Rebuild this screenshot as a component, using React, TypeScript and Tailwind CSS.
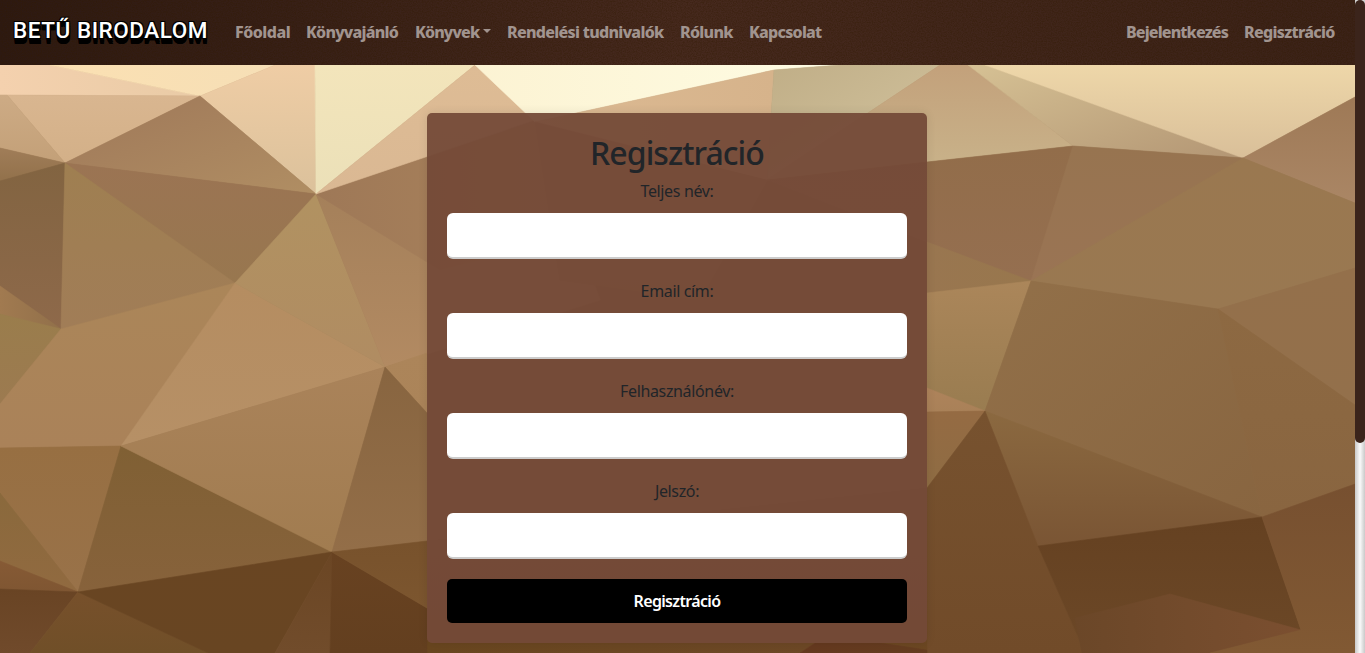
import React from "react";

type Axis = "v" | "h" | "d" | "u";
type Facet = [points: string, from: string, to: string, axis: Axis];

const AXES: Record<Axis, { x1: number; y1: number; x2: number; y2: number }> = {
  v: { x1: 0, y1: 0, x2: 0, y2: 1 },
  h: { x1: 0, y1: 0, x2: 1, y2: 0 },
  d: { x1: 0, y1: 0, x2: 1, y2: 1 },
  u: { x1: 0, y1: 1, x2: 1, y2: 0 },
};

const FACETS: Facet[] = [
  ["0,65 50,65 200,96 0,95", "#f4d1ae", "#e9cba6", "h"],
  ["50,65 275,65 200,96", "#fbe0b2", "#f6dfb6", "h"],
  ["275,65 315,65 316,194 200,96", "#efcda5", "#dbc19b", "v"],
  ["7,95 200,96 65,163", "#d9b690", "#d3b088", "v"],
  ["0,95 7,95 65,163 0,148", "#cdab85", "#c3a078", "v"],
  ["0,148 65,163 0,181", "#a07d58", "#92714b", "v"],
  ["0,181 65,163 61,329 0,286", "#826441", "#8e694a", "v"],
  ["0,286 61,329 0,314", "#a17a50", "#91704a", "h"],
  ["0,314 61,329 0,404", "#9a7d4c", "#9c7a50", "v"],
  ["65,163 200,96 316,194", "#9f7859", "#b08e63", "d"],
  ["65,163 316,194 235,283", "#9b7453", "#98774f", "v"],
  ["65,163 235,283 61,329", "#9f7f51", "#a17d57", "v"],
  ["61,329 235,283 121,446 0,448 0,404", "#ab8659", "#aa8259", "v"],
  ["235,283 385,367 121,446", "#b58d61", "#b69066", "v"],
  ["316,194 385,367 235,283", "#b19261", "#b08c62", "v"],
  ["316,194 535,120 600,300 385,367", "#9f7c57", "#b28a62", "v"],
  ["316,194 535,120 560,240 440,270", "#9e7857", "#ab845c", "h"],
  ["315,65 475,65 316,194", "#f3e5bb", "#ebe0b8", "v"],
  ["475,65 535,120 316,194", "#debc95", "#dab893", "v"],
  ["475,65 840,65 774,70 535,122", "#fcf3d3", "#fefce3", "h"],
  ["774,70 535,122 767,180", "#dcba93", "#d6b38b", "h"],
  ["535,122 767,180 700,300 560,280", "#a27c59", "#937048", "v"],
  ["774,70 840,65 940,65 767,180", "#c0ae87", "#d4c5a0", "d"],
  ["940,65 968,65 1073,146 927,162 767,180", "#c3a17b", "#c9b48b", "v"],
  ["968,65 985,65 1243,158 1073,146", "#d6c194", "#b39674", "d"],
  ["985,65 1355,65 1355,97 1243,158", "#eed7a9", "#d9bf99", "v"],
  ["1243,158 1355,97 1355,203", "#9e7956", "#aa8665", "v"],
  ["767,180 927,162 1073,146 1031,281 927,242", "#926d4a", "#956f50", "v"],
  ["1073,146 1243,158 1031,281", "#977450", "#9a7454", "v"],
  ["1243,158 1355,203 1355,268 1218,309 1031,281", "#9a7850", "#997851", "v"],
  ["927,242 1031,281 927,293", "#997650", "#98774d", "h"],
  ["927,293 1031,281 985,411 927,388", "#ab865a", "#997c50", "v"],
  ["927,388 985,411 927,412", "#ae835b", "#a98158", "v"],
  ["927,412 985,411 927,488", "#956b43", "#8e6c43", "v"],
  ["1031,281 1218,309 1262,517 985,411", "#927049", "#886540", "d"],
  ["1218,309 1355,268 1355,405", "#94704b", "#93704b", "v"],
  ["1218,309 1355,405 1355,484 1262,517", "#8d6942", "#896540", "v"],
  ["985,411 1262,517 1038,546", "#8b6940", "#7a5534", "v"],
  ["985,411 1038,546 1085,653 927,653 927,488", "#77522f", "#714b29", "v"],
  ["1038,546 1262,517 1301,630 1210,653 1085,653", "#654121", "#6c4827", "v"],
  ["1082,653 1075,618 1170,594 1301,630 1210,653", "#6b4728", "#7b4f30", "h"],
  ["1262,517 1355,484 1355,653 1210,653 1301,630", "#775030", "#815933", "v"],
  ["427,541 927,488 927,650 815,643 427,653", "#704c2c", "#6c4722", "v"],
  ["427,640 815,643 800,653 427,653", "#69461f", "#6d4826", "h"],
  ["815,643 880,643 927,650 927,653 800,653", "#65391f", "#653d20", "h"],
  ["0,448 121,446 78,592 0,493", "#976f42", "#997249", "v"],
  ["0,493 78,592 0,561", "#8a693c", "#916a40", "v"],
  ["0,561 78,592 0,589", "#865a35", "#7f5632", "v"],
  ["121,446 332,552 78,592", "#806034", "#87623b", "v"],
  ["121,446 385,367 332,552", "#aa835a", "#a17c50", "v"],
  ["385,367 427,353 427,413", "#ac855a", "#ab8459", "v"],
  ["385,367 427,413 427,541 332,552", "#886540", "#936e48", "v"],
  ["0,589 78,592 30,653 0,653", "#694424", "#704a2b", "v"],
  ["78,592 208,653 30,653", "#77502b", "#704f28", "v"],
  ["78,592 332,552 275,653 208,653", "#694522", "#684522", "v"],
  ["332,552 330,653 275,653", "#6b4624", "#714c2b", "v"],
  ["332,552 427,608 427,653 330,653", "#684221", "#633f1f", "v"],
  ["332,552 427,541 427,608", "#78522c", "#7c562f", "v"],
];

function Backdrop() {
  return (
    <svg className="absolute inset-0" width="1355" height="653" viewBox="0 0 1355 653" aria-hidden="true">
      <defs>
        {FACETS.map(([, from, to, axis], i) => (
          <linearGradient key={i} id={`facet-${i}`} {...AXES[axis]}>
            <stop offset="0" stopColor={from} />
            <stop offset="1" stopColor={to} />
          </linearGradient>
        ))}
      </defs>
      <rect width="1355" height="653" fill="#8f6c46" />
      {FACETS.map(([points], i) => (
        <polygon key={i} points={points} fill={`url(#facet-${i})`} stroke={`url(#facet-${i})`} strokeWidth="0.6" />
      ))}
    </svg>
  );
}

function Weave() {
  return (
    <svg className="absolute inset-0" width="1355" height="65" aria-hidden="true">
      <defs>
        <filter id="grain" x="0" y="0" width="100%" height="100%">
          <feTurbulence type="fractalNoise" baseFrequency="0.8" numOctaves="2" seed="4" />
          <feColorMatrix values="0 0 0 0 0.03  0 0 0 0 0.01  0 0 0 0 0  0 0.9 0 0 -0.3" />
        </filter>
      </defs>
      <rect width="1355" height="65" filter="url(#grain)" />
    </svg>
  );
}

function NavLink({ className, children }: { className: string; children: React.ReactNode }) {
  return (
    <a href="#" className={`flex shrink-0 items-center whitespace-nowrap ${className}`}>
      {children}
    </a>
  );
}

function Field({ label, type }: { label: string; type: string }) {
  return (
    <label className="mb-5 flex flex-col items-center gap-2.5">
      <span className="h-6 text-base leading-6 tracking-[-0.35px]">{label}</span>
      <input type={type} className="h-[46px] w-full rounded-md border-b-2 border-[#ccc] bg-white px-3 text-base outline-none" />
    </label>
  );
}

export default function App() {
  return (
    <div className="flex h-[653px] w-full overflow-hidden bg-white font-['Noto_Sans','Open_Sans',sans-serif] text-[#212529]">
      <div className="relative flex w-[1355px] shrink-0 flex-col">
        <Backdrop />
        <header className="relative h-[65px] shrink-0 bg-linear-to-r from-[#2d1912] via-[#46291e] to-[#3b2218]">
          <Weave />
          <nav className="relative flex h-full items-center gap-4 pr-5 pb-px pl-[13px] text-base font-extrabold text-[#a1948f]">
            <a
              href="#"
              className="mr-3 w-[194px] shrink-0 pb-[5px] font-['Roboto',sans-serif] text-[22.5px] leading-8 font-medium tracking-[0.55px] whitespace-nowrap text-white [text-shadow:1px_1px_0_#000,-1px_-1px_0_#000,1px_-1px_0_#000,-1px_1px_0_#000,0_2px_0_#000,0_3px_0_#000,0_4px_0_#000,0_5px_0_#000,0_6px_0_#000,1px_4px_0_#000,1px_6px_0_#000]"
            >
              BETŰ BIRODALOM
            </a>
            <NavLink className="w-[55px] tracking-[-0.5px]">Főoldal</NavLink>
            <NavLink className="w-[93px] tracking-[-0.75px]">Könyvajánló</NavLink>
            <NavLink className="w-[76px] tracking-[-0.85px]">
              Könyvek
              <span className="mb-[3px] ml-[4px] border-x-[4px] border-t-[4px] border-x-transparent border-t-current" />
            </NavLink>
            <NavLink className="w-[157px] tracking-[-0.7px]">Rendelési tudnivalók</NavLink>
            <NavLink className="w-[53px] tracking-[-0.7px]">Rólunk</NavLink>
            <NavLink className="w-[73px] tracking-[-0.75px]">Kapcsolat</NavLink>
            <NavLink className="ml-auto w-[102px] tracking-[-0.85px]">Bejelentkezés</NavLink>
            <NavLink className="w-[91px] tracking-[-0.7px]">Regisztráció</NavLink>
          </nav>
        </header>
        <main className="relative flex justify-center pt-12">
          <form className="mr-px h-[530px] w-[500px] rounded-[5px] bg-[#744a38]/95 p-5 shadow-[0_0_10px_rgba(0,0,0,0.1)]">
            <h2 className="mb-2 h-[38px] pt-px text-center text-[32px] leading-[38px] font-medium tracking-[-0.95px]">Regisztráció</h2>
            <Field label="Teljes név:" type="text" />
            <Field label="Email cím:" type="email" />
            <Field label="Felhasználónév:" type="text" />
            <Field label="Jelszó:" type="password" />
            <button type="button" className="h-11 w-full rounded-[5px] bg-black text-base font-semibold tracking-[-0.65px] text-white">
              Regisztráció
            </button>
          </form>
        </main>
      </div>
      <div className="h-full w-[10px] shrink-0 bg-linear-to-r from-[#c9c9c9] via-[#fafafa] to-[#c9c9c9]">
        <div className="h-[443px] rounded-[5px] bg-[#3b241b]" />
      </div>
    </div>
  );
}
